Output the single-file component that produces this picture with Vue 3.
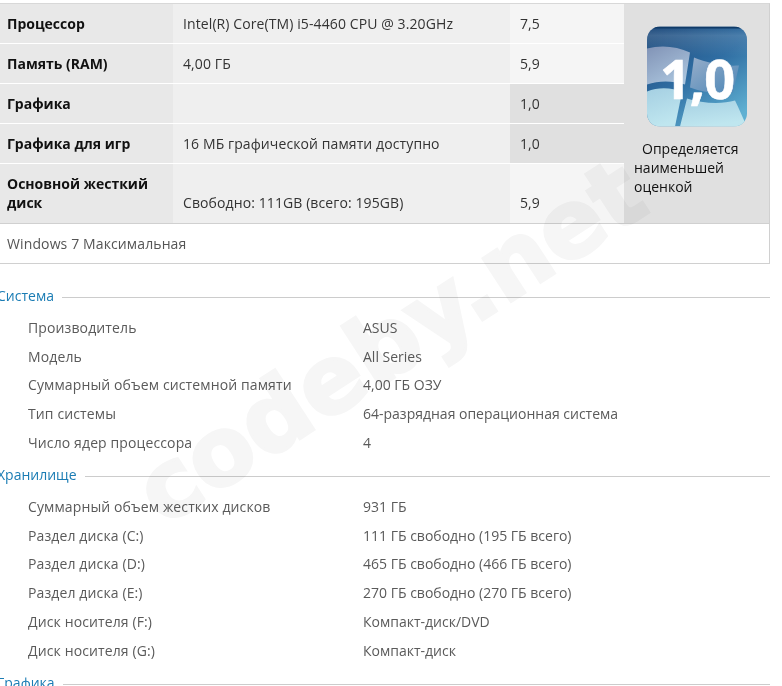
<template>
  <div class="page">
    <div class="score-box">
      <div class="score-left">
        <div v-for="row in scores" :key="row.name" class="score-row" :class="{ tall: row.tall }">
          <div class="cell name">{{ row.name }}</div>
          <div class="cell info">{{ row.info }}</div>
          <div class="cell value" :class="{ lowest: row.value === '1,0' }">{{ row.value }}</div>
        </div>
      </div>
      <div class="score-panel">
        <div class="badge">
          <svg class="badge-art" viewBox="0 0 100 100" width="100" height="101">
            <defs>
              <linearGradient id="badgeBg" x1="0.1" y1="0" x2="0.75" y2="1">
                <stop offset="0" stop-color="#1d4a7c" />
                <stop offset="0.5" stop-color="#2f6da2" />
                <stop offset="1" stop-color="#5fb0d2" />
              </linearGradient>
              <linearGradient id="gloss" x1="0" y1="0" x2="0" y2="1">
                <stop offset="0" stop-color="#fff" stop-opacity="0" />
                <stop offset="0.3" stop-color="#fff" stop-opacity="0.14" />
                <stop offset="1" stop-color="#fff" stop-opacity="0" />
              </linearGradient>
              <linearGradient id="paneTop" x1="0" y1="0" x2="0.6" y2="1">
                <stop offset="0" stop-color="#8193b6" />
                <stop offset="1" stop-color="#a9c3dc" />
              </linearGradient>
              <linearGradient id="paneRight" x1="0" y1="0" x2="1" y2="1">
                <stop offset="0" stop-color="#98aeca" />
                <stop offset="1" stop-color="#4b86b6" />
              </linearGradient>
              <linearGradient id="paneLow" x1="0" y1="0" x2="0.3" y2="1">
                <stop offset="0" stop-color="#a5cfe2" />
                <stop offset="1" stop-color="#bfe6ef" />
              </linearGradient>
              <clipPath id="badgeClip">
                <rect width="100" height="100" rx="13" />
              </clipPath>
            </defs>
            <g clip-path="url(#badgeClip)">
              <rect width="100" height="100" fill="url(#badgeBg)" />
              <rect width="100" height="30" fill="url(#gloss)" />
              <rect width="100" height="2" fill="#0f3a68" />
              <path d="M0 22C15 18 30 20 43 26L38 58C25 54 12 54 0 58Z" fill="url(#paneTop)" />
              <path d="M47 31C60 36 75 40 92 39L86 66C72 68 56 66 43 61Z" fill="url(#paneRight)" />
              <path d="M0 65C12 60 26 61 35 66L28 100H0Z" fill="url(#paneLow)" />
              <path d="M40 72C55 77 75 78 88 74C92 82 96 92 100 100H33Z" fill="url(#paneLow)" />
            </g>
          </svg>
          <span class="badge-num">1,0</span>
        </div>
        <p class="panel-text"><span class="indent">Определяется</span><br />наименьшей<br />оценкой</p>
      </div>
    </div>
    <div class="edition">Windows 7 Максимальная</div>

    <section v-for="group in groups" :key="group.title" class="group">
      <h3 class="group-title"><span>{{ group.title }}</span></h3>
      <div v-for="item in group.items" :key="item[0]" class="prop">
        <div class="prop-name">{{ item[0] }}</div>
        <div class="prop-value">{{ item[1] }}</div>
      </div>
    </section>

    <div class="watermark">codeby.net</div>
  </div>
</template>

<script setup>
const scores = [
  { name: 'Процессор', info: 'Intel(R) Core(TM) i5-4460 CPU @ 3.20GHz', value: '7,5' },
  { name: 'Память (RAM)', info: '4,00 ГБ', value: '5,9' },
  { name: 'Графика', info: '', value: '1,0' },
  { name: 'Графика для игр', info: '16 МБ графической памяти доступно', value: '1,0' },
  { name: 'Основной жесткий диск', info: 'Свободно: 111GB (всего: 195GB)', value: '5,9', tall: true }
];

const groups = [
  {
    title: 'Система',
    items: [
      ['Производитель', 'ASUS'],
      ['Модель', 'All Series'],
      ['Суммарный объем системной памяти', '4,00 ГБ ОЗУ'],
      ['Тип системы', '64-разрядная операционная система'],
      ['Число ядер процессора', '4']
    ]
  },
  {
    title: 'Хранилище',
    items: [
      ['Суммарный объем жестких дисков', '931 ГБ'],
      ['Раздел диска (C:)', '111 ГБ свободно (195 ГБ всего)'],
      ['Раздел диска (D:)', '465 ГБ свободно (466 ГБ всего)'],
      ['Раздел диска (E:)', '270 ГБ свободно (270 ГБ всего)'],
      ['Диск носителя (F:)', 'Компакт-диск/DVD'],
      ['Диск носителя (G:)', 'Компакт-диск']
    ]
  },
  { title: 'Графика', items: [] }
];
</script>

<style>
html, body {
  background: #fff;
  overflow: hidden;
}
</style>

<style scoped>
.page {
  position: relative;
  width: 782px;
  height: 686px;
  overflow: hidden;
  padding-top: 3px;
  box-sizing: border-box;
  font-family: "Open Sans", "Noto Sans", sans-serif;
  font-size: 14px;
  color: #222;
}

.score-box {
  display: flex;
  width: 770px;
  box-sizing: border-box;
  border-top: 1px solid #d8d8d8;
  border-right: 1px solid #d0d0d0;
  border-bottom: 1px solid #d0d0d0;
}

.score-left {
  width: 624px;
}

.score-row {
  display: grid;
  grid-template-columns: 173px 337px 114px;
  height: 40px;
  border-bottom: 1px solid #fff;
  box-sizing: border-box;
}

.score-row.tall {
  height: 59px;
  border-bottom: none;
}

.cell {
  display: flex;
  align-items: center;
  line-height: 19px;
}

.tall .cell {
  align-items: flex-end;
  padding-bottom: 11px;
}

.name {
  background: #e8e8e8;
  padding-left: 7px;
  font-weight: 700;
  color: #111;
}

.info {
  background: #efefef;
  padding-left: 10px;
  letter-spacing: 0.1px;
  color: #333;
}

.value {
  background: #f5f5f5;
  padding-left: 10px;
  color: #333;
}

.value.lowest {
  background: #e0e0e0;
}

.score-panel {
  flex: 1;
  background: #e0e0e0;
  padding: 22px 0 0 10px;
}

.badge {
  position: relative;
  width: 100px;
  height: 101px;
  margin-left: 13px;
}

.badge-art {
  display: block;
}

.badge-num {
  position: absolute;
  left: 0;
  right: 0;
  top: 22px;
  text-align: center;
  font-size: 54px;
  line-height: 60px;
  letter-spacing: -1px;
  font-weight: 700;
  color: #fff;
  -webkit-text-stroke: 0.6px #fff;
}

.panel-text {
  margin: 12px 0 0;
  line-height: 19px;
  color: #111;
}

.indent {
  margin-left: 8px;
}

.edition {
  width: 770px;
  height: 40px;
  box-sizing: border-box;
  margin-bottom: 15.5px;
  padding-left: 7px;
  display: flex;
  align-items: center;
  border-right: 1px solid #d0d0d0;
  border-bottom: 1px solid #d0d0d0;
  letter-spacing: 0.12px;
  color: #555;
}

.group {
  width: 770px;
}

.group-title {
  display: flex;
  align-items: center;
  margin: 1.6px 0 1.6px -3px;
  height: 32px;
  font-size: 14px;
  font-weight: 400;
  color: #1a7cb4;
}

.group-title::after {
  content: "";
  flex: 1;
  height: 1px;
  background: #ccc;
  margin-left: 8px;
  margin-top: 4px;
}

.prop {
  display: grid;
  grid-template-columns: 335px 1fr;
  height: 28.75px;
  align-items: center;
  padding-left: 28px;
  color: #5a5a5a;
}

.prop-name {
  letter-spacing: 0.12px;
}

.watermark {
  position: absolute;
  left: 85px;
  top: 282px;
  width: 610px;
  text-align: center;
  font-family: "DejaVu Sans", sans-serif;
  font-size: 94px;
  line-height: 120px;
  font-weight: 700;
  white-space: nowrap;
  color: #f6f6f6;
  -webkit-text-stroke: 3px #f6f6f6;
  mix-blend-mode: multiply;
  transform: rotate(-33deg);
  pointer-events: none;
}
</style>
